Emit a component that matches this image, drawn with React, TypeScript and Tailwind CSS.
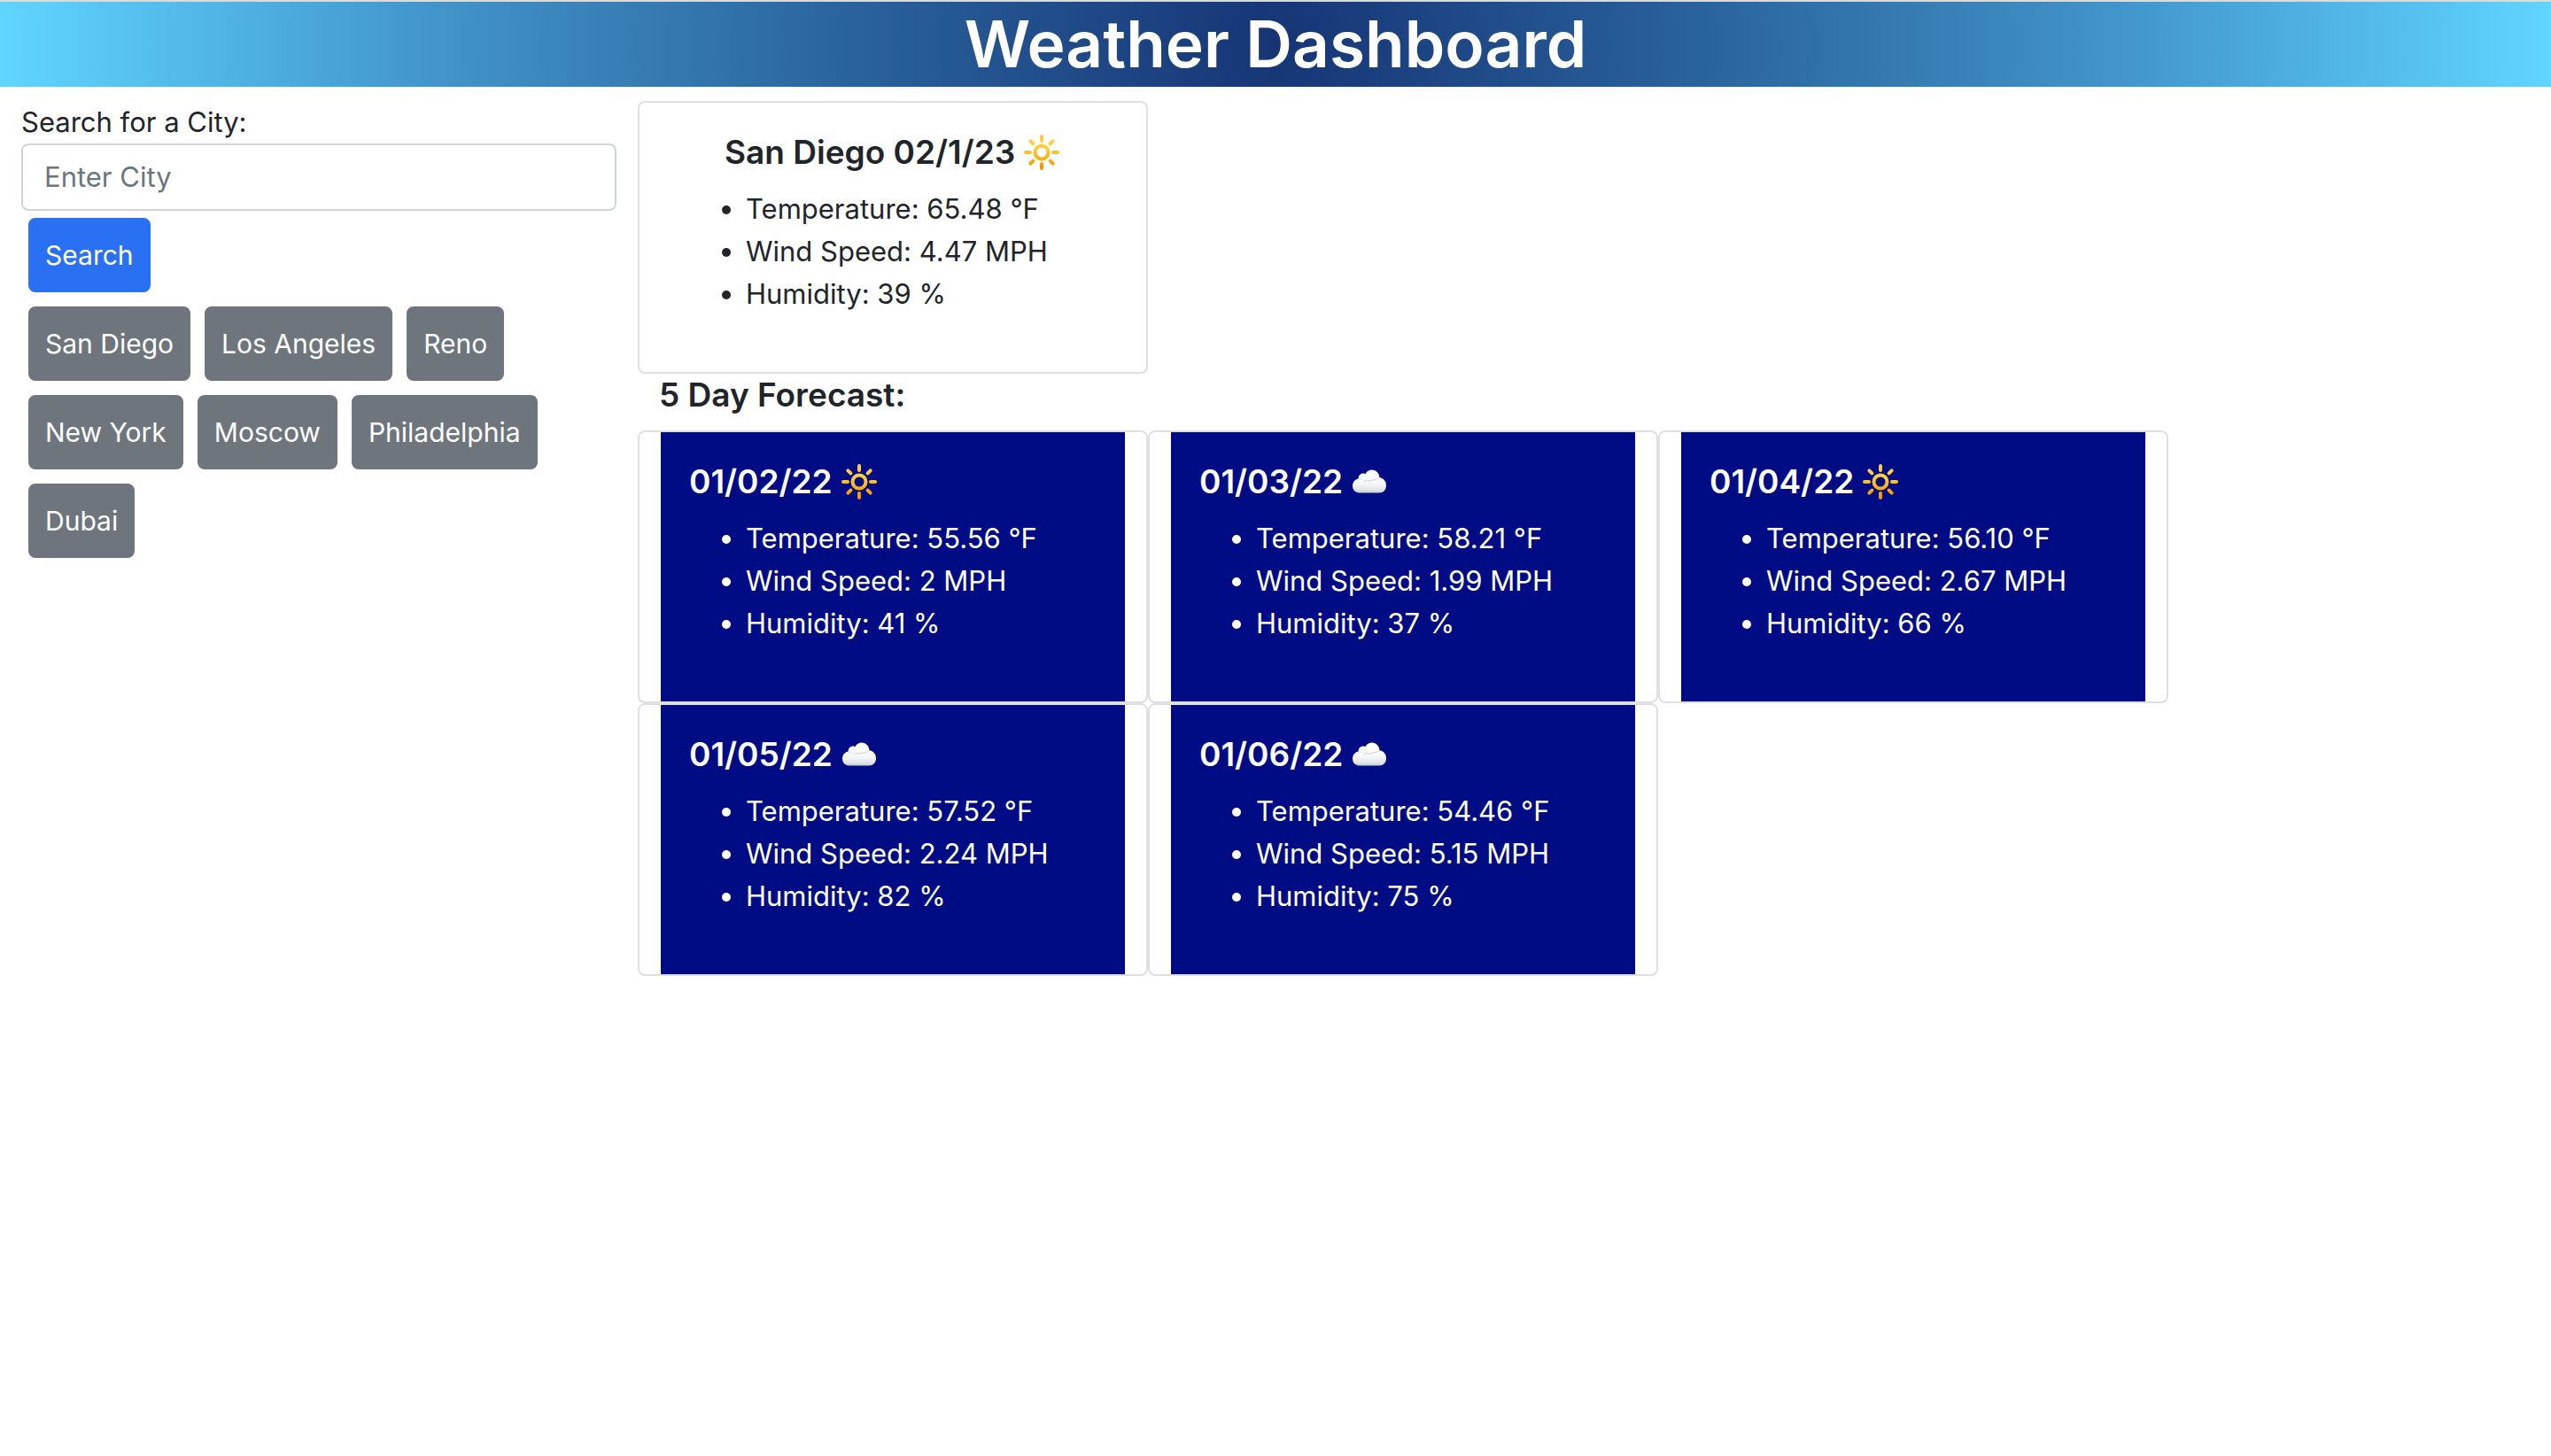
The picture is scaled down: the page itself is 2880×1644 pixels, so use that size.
import React from "react";

type Sky = "sun" | "cloud";

interface Reading {
  title: string;
  sky: Sky;
  temperature: string;
  wind: string;
  humidity: string;
}

const cities = ["San Diego", "Los Angeles", "Reno", "New York", "Moscow", "Philadelphia", "Dubai"];

const current: Reading = {
  title: "San Diego 02/1/23",
  sky: "sun",
  temperature: "65.48",
  wind: "4.47",
  humidity: "39",
};

const forecast: Reading[] = [
  { title: "01/02/22", sky: "sun", temperature: "55.56", wind: "2", humidity: "41" },
  { title: "01/03/22", sky: "cloud", temperature: "58.21", wind: "1.99", humidity: "37" },
  { title: "01/04/22", sky: "sun", temperature: "56.10", wind: "2.67", humidity: "66" },
  { title: "01/05/22", sky: "cloud", temperature: "57.52", wind: "2.24", humidity: "82" },
  { title: "01/06/22", sky: "cloud", temperature: "54.46", wind: "5.15", humidity: "75" },
];

const rays = [0, 45, 90, 135, 180, 225, 270, 315];

function SunIcon() {
  return (
    <svg viewBox="0 0 40 40" className="size-10 shrink-0" role="img" aria-label="Sunny">
      <defs>
        <linearGradient id="sun-fill" gradientUnits="userSpaceOnUse" x1="0" y1="0" x2="0" y2="40">
          <stop offset="0" stopColor="#ffc954" />
          <stop offset="0.35" stopColor="#ffcf3e" />
          <stop offset="0.7" stopColor="#fbae12" />
          <stop offset="1" stopColor="#f08c0c" />
        </linearGradient>
      </defs>
      <circle cx="20" cy="20" r="7.5" fill="none" stroke="url(#sun-fill)" strokeWidth="4" />
      {rays.map((angle) => {
        const a = (angle * Math.PI) / 180;
        const inner = angle % 90 === 0 ? 13 : 13.6;
        const outer = angle % 90 === 0 ? 18 : 17.9;
        return (
          <line
            key={angle}
            x1={20 + inner * Math.sin(a)}
            y1={20 - inner * Math.cos(a) + 0.01}
            x2={20 + outer * Math.sin(a) + 0.01}
            y2={20 - outer * Math.cos(a)}
            stroke="url(#sun-fill)"
            strokeWidth="4"
            strokeLinecap="round"
          />
        );
      })}
    </svg>
  );
}

function CloudIcon() {
  return (
    <svg viewBox="0 0 40 40" className="size-10 shrink-0" role="img" aria-label="Cloudy">
      <defs>
        <linearGradient id="cloud-fill" x1="0" y1="0" x2="0" y2="1">
          <stop offset="0" stopColor="#ffffff" />
          <stop offset="0.6" stopColor="#f6f7f8" />
          <stop offset="0.85" stopColor="#e3e7ea" />
          <stop offset="1" stopColor="#c3cad2" />
        </linearGradient>
      </defs>
      <path
        d="M8.5 32.5C4 32.5 1 29.2 1 24.6C1 20.2 3.8 17 7.6 16.4C7.5 12.6 10 10.4 13 10.4C14 10.4 14.9 10.6 15.6 11.1C17 8.3 19.8 6.6 22.8 6.6C27.6 6.6 31.2 10.3 31.4 15.2C36 15.8 39 19.4 39 24C39 29 35.8 32.5 31 32.5Z"
        fill="url(#cloud-fill)"
      />
      <path d="M14 20C15.5 17.8 18 17.8 19.5 19.4C22 17.4 26.5 18.2 29.5 16.4" fill="none" stroke="#d5dade" strokeWidth="1.2" strokeLinecap="round" />
      <path d="M7.6 17.2C9.5 16.6 11 17 12 17.8" fill="none" stroke="#e0e4e7" strokeWidth="1" strokeLinecap="round" />
    </svg>
  );
}

function WeatherDetails({ reading, indent }: { reading: Reading; indent?: boolean }) {
  return (
    <div className="p-8">
      <h5 className={`mb-4 flex h-12 items-center gap-2.5 text-[37px] leading-[48px] font-semibold whitespace-nowrap ${indent ? "ml-10" : ""}`}>
        <span>{reading.title}</span>
        {reading.sky === "sun" ? <SunIcon /> : <CloudIcon />}
      </h5>
      <ul className="mb-8 list-disc pl-16">
        <li>Temperature: {reading.temperature} °F</li>
        <li>Wind Speed: {reading.wind} MPH</li>
        <li>Humidity: {reading.humidity} %</li>
      </ul>
    </div>
  );
}

export default function App() {
  return (
    <div className="bg-white font-['Inter',sans-serif] text-[31px] leading-[48px] text-[#212529]">
      <header className="border-t-2 border-[#d9dcdf] bg-[radial-gradient(circle,#163474_0%,#2a649d_34%,#4193c8_65%,#5fd5ff_100%)]">
        <h1 className="text-center text-[73px] leading-[96px] font-semibold text-white">Weather Dashboard</h1>
      </header>

      <div className="flex items-start pt-4">
        <aside className="w-1/4 shrink-0 px-6">
          <form onSubmit={(event) => event.preventDefault()}>
            <label htmlFor="city" className="block">
              Search for a City:
            </label>
            <input
              id="city"
              type="text"
              placeholder="Enter City"
              className="block w-full rounded-lg border-2 border-[#ced4da] bg-white px-6 py-3 placeholder:text-[#6c757d]"
            />
            <button type="submit" className="m-2 rounded-lg border-2 border-[#2970f3] bg-[#2970f3] px-[17px] py-4 text-[30px] text-white">
              Search
            </button>
          </form>
          <div className="flex flex-wrap">
            {cities.map((city) => (
              <button key={city} type="button" className="m-2 rounded-lg border-2 border-[#6e757c] bg-[#6e757c] px-[17px] py-4 text-[30px] text-white">
                {city}
              </button>
            ))}
          </div>
        </aside>

        <main className="min-w-0 flex-1">
          <section className="w-[576px] rounded-lg border-2 border-[#dfdfdf] px-6">
            <WeatherDetails reading={current} indent />
          </section>
          <h2 className="mb-4 px-6 text-[37px] leading-[48px] font-semibold">5 Day Forecast:</h2>
          <div className="flex flex-wrap">
            {forecast.map((day) => (
              <section key={day.title} className="w-[576px] rounded-lg border-2 border-[#dfdfdf] px-6">
                <div className="bg-[#000c84] text-white">
                  <WeatherDetails reading={day} />
                </div>
              </section>
            ))}
          </div>
        </main>
      </div>
    </div>
  );
}
